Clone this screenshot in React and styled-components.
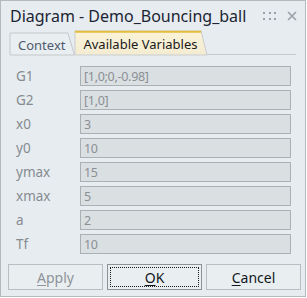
import React from "react";
import styled, { createGlobalStyle } from "styled-components";

const Global = createGlobalStyle`
  html, body { margin: 0; padding: 0; background: #ffffff; }
  body { font-family: "Noto Sans", "Liberation Sans", sans-serif; }
`;

const Window = styled.div`
  box-sizing: border-box;
  width: 306px;
  height: 297px;
  border: 1px solid #b4b9bd;
  background: #e6ecef;
  display: flex;
  flex-direction: column;
`;

const TitleBar = styled.div`
  display: flex;
  align-items: center;
  height: 29px;
  padding: 1px 8px 0 9px;
  box-sizing: border-box;
`;

const Title = styled.div`
  flex: 1;
  font-size: 16px;
  color: #1c2433;
  white-space: nowrap;
`;

const Grip = styled.div`
  display: grid;
  grid-template-columns: repeat(3, 2px);
  grid-template-rows: repeat(2, 2px);
  gap: 4px 3.5px;
  margin-right: 11px;
  span { background: #9aa0a6; }
`;

const CloseBtn = styled.svg`
  width: 10px;
  height: 10px;
`;

const TabStrip = styled.div`
  display: flex;
  align-items: flex-end;
  margin: 0 9px 0 9px;
  height: 24px;
  border-bottom: 1px solid #c4c9cd;
  gap: 1px;
`;

const Tab = styled.div`
  position: relative;
  height: ${(p) => (p.$active ? 24 : 22)}px;
  padding: 0 ${(p) => (p.$active ? 10 : 9)}px 0 8px;
  display: flex;
  align-items: center;
  font-size: 13px;
  color: ${(p) => (p.$active ? "#1a1a1a" : "#4f5a6e")};
  margin-bottom: -1px;
  z-index: ${(p) => (p.$active ? 2 : 1)};
`;

const TabText = styled.span`
  position: relative;
  top: 1px;
`;

const TabShape = styled.svg`
  position: absolute;
  left: 0;
  top: 0;
  width: 100%;
  height: 100%;
  overflow: visible;
`;

function TabBg({ active }) {
  return (
    <TabShape preserveAspectRatio="none" viewBox="0 0 100 100">
      <defs>
        <linearGradient id="tabg" x1="0" y1="0" x2="0" y2="1">
          <stop offset="0" stopColor="#fbf3d8" />
          <stop offset="1" stopColor="#f4ecd2" />
        </linearGradient>
      </defs>
      {active ? (
        <>
          <polygon points="0,100 0,0 95.5,0 100,100" fill="url(#tabg)" stroke="#c9cdd0" strokeWidth="1" vectorEffect="non-scaling-stroke" />
          <line x1="0" y1="3" x2="95.5" y2="3" stroke="#e6bc3e" strokeWidth="2" vectorEffect="non-scaling-stroke" />
        </>
      ) : (
        <polygon points="0,100 0,0 90,0 100,100" fill="#e9eef1" stroke="#c4c8cc" strokeWidth="1" vectorEffect="non-scaling-stroke" />
      )}
    </TabShape>
  );
}

const Form = styled.div`
  display: grid;
  grid-template-columns: 64px 211px;
  row-gap: 4px;
  padding: 11px 0 0 15px;
  align-items: center;
`;

const Label = styled.div`
  font-size: 13.5px;
  color: #868b91;
`;

const Field = styled.div`
  box-sizing: border-box;
  height: 20px;
  border: 1px solid #abb0b4;
  background: #dadfe2;
  font-size: 12.5px;
  letter-spacing: -0.3px;
  color: #8b9095;
  padding: 0 3px;
  display: flex;
  align-items: center;
  white-space: nowrap;
`;

const ButtonRow = styled.div`
  display: flex;
  gap: 4px;
  padding: 10px 0 0 7px;
`;

const Button = styled.div`
  position: relative;
  box-sizing: border-box;
  width: 95px;
  height: 26px;
  border: 1px solid ${(p) => (p.$default ? "#8c9196" : "#b9bec2")};
  background: #e9eef1;
  display: flex;
  align-items: center;
  justify-content: center;
  font-size: 14px;
  color: ${(p) => (p.$disabled ? "#8e949a" : "#14181d")};
  ${(p) =>
    p.$default &&
    `&::after {
      content: "";
      position: absolute;
      inset: 2px;
      border: 1px dotted #1a1a1a;
    }`}
`;

const U = styled.span`
  text-decoration: underline;
  text-underline-offset: 2px;
`;

const rows = [
  ["G1", "[1,0;0,-0.98]"],
  ["G2", "[1,0]"],
  ["x0", "3"],
  ["y0", "10"],
  ["ymax", "15"],
  ["xmax", "5"],
  ["a", "2"],
  ["Tf", "10"],
];

export default function App() {
  return (
    <>
      <Global />
      <Window>
        <TitleBar>
          <Title>Diagram - Demo_Bouncing_ball</Title>
          <Grip>
            <span /><span /><span /><span /><span /><span />
          </Grip>
          <CloseBtn viewBox="0 0 10 10">
            <path d="M1 1 L9 9 M9 1 L1 9" stroke="#9aa0a6" strokeWidth="1.6" />
          </CloseBtn>
        </TitleBar>
        <TabStrip>
          <Tab>
            <TabBg />
            <TabText>Context</TabText>
          </Tab>
          <Tab $active>
            <TabBg active />
            <TabText>Available Variables</TabText>
          </Tab>
        </TabStrip>
        <Form>
          {rows.map(([k, v]) => (
            <React.Fragment key={k}>
              <Label>{k}</Label>
              <Field>{v}</Field>
            </React.Fragment>
          ))}
        </Form>
        <ButtonRow>
          <Button $disabled>
            <span><U>A</U>pply</span>
          </Button>
          <Button $default>
            <span><U>O</U>K</span>
          </Button>
          <Button>
            <span><U>C</U>ancel</span>
          </Button>
        </ButtonRow>
      </Window>
    </>
  );
}
